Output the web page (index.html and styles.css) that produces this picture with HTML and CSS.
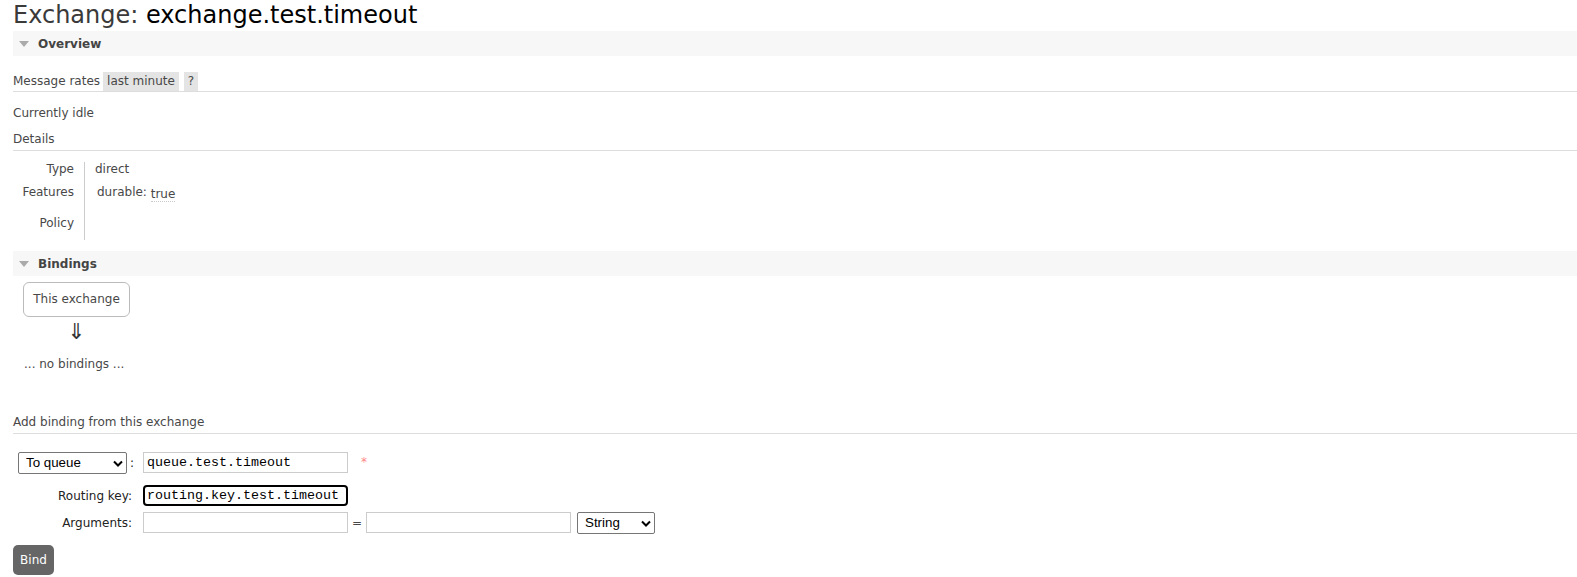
FILE: index.html
```html
<!DOCTYPE html>
<html>
<head>
<meta charset="utf-8">
<link rel="stylesheet" href="styles.css">
</head>
<body>
<div class="main">
  <h1>Exchange: <span class="name">exchange.test.timeout</span></h1>

  <div class="section-h"><span class="tri"></span>Overview</div>

  <div class="rates">
    <span>Message rates</span>
    <span class="pill pill-first">last minute</span>
    <span class="pill pill-q">?</span>
  </div>

  <p class="idle">Currently idle</p>

  <h3 class="sub">Details</h3>

  <table class="details">
    <tr class="r1"><th>Type</th><td>direct</td></tr>
    <tr class="r2"><th>Features</th><td><span class="feat">durable:</span> <abbr class="val">true</abbr></td></tr>
    <tr class="r3"><th>Policy</th><td></td></tr>
  </table>

  <div class="section-h section-b"><span class="tri"></span>Bindings</div>

  <div class="flow">
    <div class="xbox">This exchange</div>
    <div class="arrow">⇓</div>
  </div>
  <p class="nobind">... no bindings ...</p>

  <h3 class="sub sub-add">Add binding from this exchange</h3>

  <form class="bindform">
    <div class="frow">
      <div class="flabel flabel-sel">
        <span class="selwrap sel-queue">
          <select class="sel"><option>To queue</option></select>
          <svg class="chev" width="10" height="7" viewBox="0 0 10 7"><path d="M1 1.5 L5 5.5 L9 1.5" fill="none" stroke="#000" stroke-width="2"/></svg>
        </span><span class="colon">:</span>
      </div>
      <input class="txt" type="text" value="queue.test.timeout">
      <span class="req">*</span>
    </div>
    <div class="frow frow2">
      <label class="flabel">Routing key:</label>
      <input class="txt focused" type="text" value="routing.key.test.timeout">
    </div>
    <div class="frow frow3">
      <label class="flabel">Arguments:</label>
      <input class="txt" type="text" value="">
      <span class="eq">=</span>
      <input class="txt" type="text" value="">
      <span class="selwrap sel-type">
        <select class="sel"><option>String</option></select>
        <svg class="chev" width="10" height="7" viewBox="0 0 10 7"><path d="M1 1.5 L5 5.5 L9 1.5" fill="none" stroke="#000" stroke-width="2"/></svg>
      </span>
    </div>
    <button type="button" class="btn">Bind</button>
  </form>
</div>
</body>
</html>
```
FILE: styles.css
```css
html, body {
  margin: 0;
  padding: 0;
  background: #fff;
}
body {
  font-family: "DejaVu Sans", Verdana, sans-serif;
  font-size: 12px;
  color: #484848;
}
.main {
  padding-left: 13px;
}
h1 {
  margin: 0;
  height: 31px;
  font-size: 24px;
  font-weight: normal;
  line-height: 31px;
  color: #3a3a3a;
  white-space: nowrap;
}
h1 .name {
  color: #000;
}
.section-h {
  height: 25px;
  background: #f7f7f7;
  display: flex;
  align-items: center;
  font-weight: bold;
  color: #444;
}
.tri {
  width: 0;
  height: 0;
  border-left: 5px solid transparent;
  border-right: 5px solid transparent;
  border-top: 6px solid #aaa;
  margin: 0 9px 0 6px;
}
.rates {
  margin-top: 16px;
  height: 19px;
  display: flex;
  align-items: stretch;
  border-bottom: 1px solid #ddd;
  line-height: 19px;
}
.pill {
  background: #e4e4e4;
  padding: 0 4px;
}
.pill-first {
  margin-left: 3px;
}
.pill-q {
  margin-left: 5px;
}
.idle {
  margin: 13px 0 0;
  line-height: 16px;
}
.sub {
  margin: 10px 0 0;
  font-size: 12px;
  font-weight: normal;
  line-height: 16px;
  padding-bottom: 3px;
  border-bottom: 1px solid #ddd;
}
.details {
  border-collapse: collapse;
  margin-top: 11px;
}
.details th {
  width: 61px;
  text-align: right;
  font-weight: normal;
  padding: 0 10px 0 0;
  vertical-align: top;
  line-height: 14px;
}
.details td {
  border-left: 1px solid #ccc;
  padding: 0 0 0 10px;
  vertical-align: top;
  line-height: 14px;
}
.r1 th, .r1 td { height: 20px; padding-top: 0; }
.r2 th, .r2 td { height: 23px; padding-top: 3px; }
.r3 th, .r3 td { height: 24px; padding-top: 8px; }
.feat {
  margin-left: 2px;
}
.val {
  text-decoration: none;
  border-bottom: 1px dotted #ccc;
  position: relative;
  top: 2px;
}
.section-b {
  margin-top: 11px;
}
.flow {
  width: 107px;
  margin-left: 10px;
  text-align: center;
}
.xbox {
  margin-top: 6px;
  height: 33px;
  line-height: 33px;
  border: 1px solid #bbb;
  border-radius: 6px;
}
.arrow {
  margin-top: 3px;
  font-size: 22px;
  line-height: 24px;
  color: #333;
}
.nobind {
  margin: 12px 0 0 11px;
  line-height: 16px;
}
.sub-add {
  margin-top: 42px;
  padding-bottom: 3px;
}
.bindform {
  margin-top: 17px;
}
.frow {
  display: flex;
  align-items: center;
  height: 23px;
}
.frow2 {
  margin-top: 11px;
  height: 21px;
}
.frow3 {
  margin-top: 5px;
  height: 23px;
}
.flabel {
  width: 119px;
  text-align: right;
  margin-right: 11px;
  display: flex;
  justify-content: flex-end;
  align-items: center;
  color: #222;
}
.flabel-sel {
  justify-content: flex-start;
  padding-left: 5px;
  width: 114px;
}
.colon {
  margin-left: 3px;
}
.selwrap {
  position: relative;
  display: inline-block;
}
.sel {
  appearance: none;
  -webkit-appearance: none;
  font-family: "Liberation Sans", Arial, sans-serif;
  font-size: 13.33px;
  color: #000;
  background: #fff;
  border: 1px solid #767676;
  border-radius: 2px;
  height: 22px;
  padding: 0 0 0 7px;
  margin: 0;
}
.sel-queue .sel {
  width: 109px;
}
.sel-type {
  margin-left: 6px;
}
.sel-type .sel {
  width: 78px;
}
.chev {
  position: absolute;
  right: 4px;
  top: 8px;
  pointer-events: none;
}
.txt {
  box-sizing: border-box;
  width: 205px;
  height: 21px;
  margin: 0;
  padding: 0 3px;
  border: 1px solid #ccc;
  font-family: "Liberation Mono", "Courier New", monospace;
  font-size: 13.33px;
  color: #000;
  background: #fff;
}
.focused {
  border: 2px solid #000;
  border-radius: 4px;
  padding: 0 2px;
}
.req {
  color: #f88;
  margin-left: 13px;
  align-self: flex-start;
  line-height: 14px;
  padding-top: 4px;
}
.eq {
  width: 18px;
  text-align: center;
}
.btn {
  margin-top: 11px;
  width: 41px;
  height: 30px;
  border: none;
  border-radius: 5px;
  background: #666;
  color: #fff;
  font-family: "DejaVu Sans", Verdana, sans-serif;
  font-size: 12px;
  padding: 0;
}
```
